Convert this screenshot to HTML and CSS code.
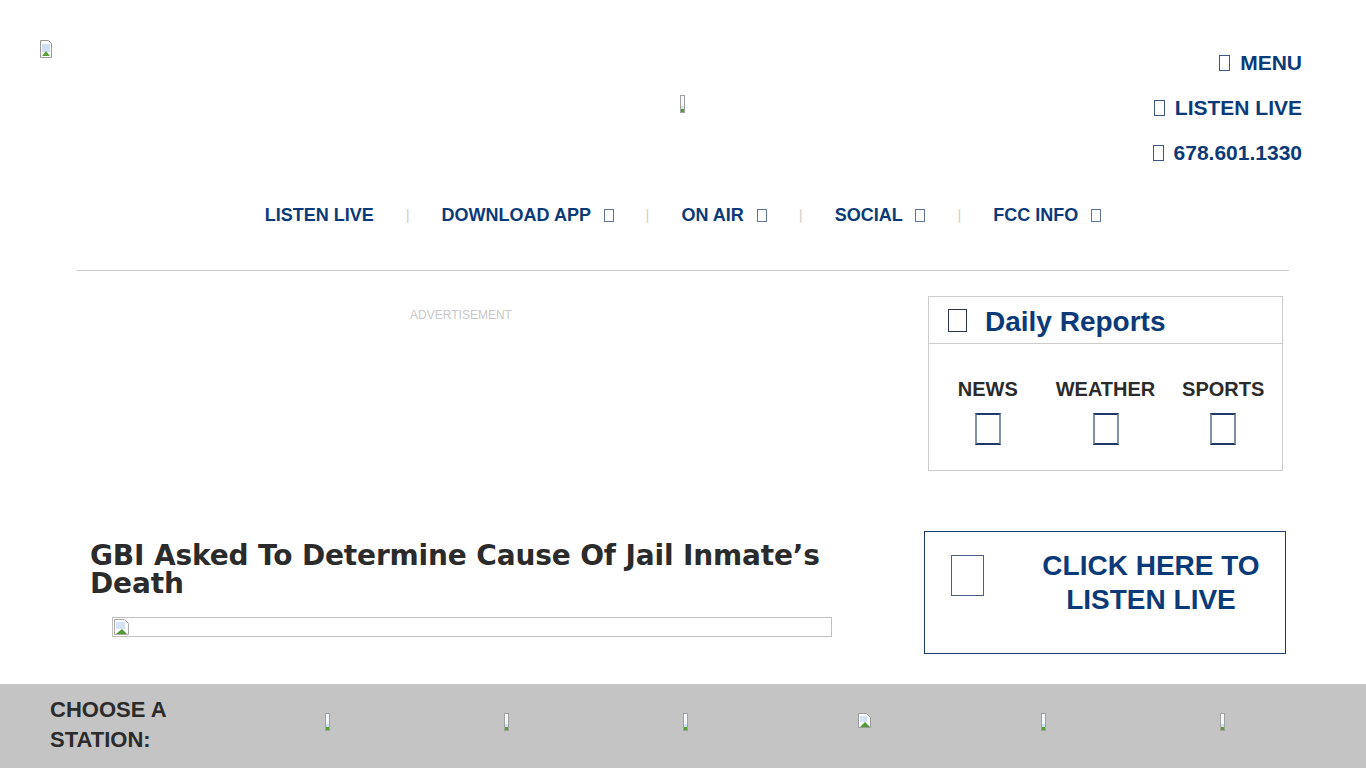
FILE: index.html
```html
<!DOCTYPE html>
<html>
<head>
  <link rel="stylesheet" href="styles.css">
</head>
<body>
  <header class="masthead">
    <div class="logo">
      <svg class="broken" width="12" height="18" viewBox="0 0 12 18">
        <path d="M0.5 0.5h8l3 3v14h-11z" fill="#fff" stroke="#999"/>
        <rect x="2" y="4" width="8" height="8" fill="#cfe0f4"/>
        <path d="M2 16l4-5 4 5z" fill="#5a9e3a"/>
      </svg>
    </div>
    <div class="mid-img"><span class="thin-img"></span></div>
    <ul class="quick-links">
      <li><span class="tofu"></span> MENU</li>
      <li><span class="tofu"></span> LISTEN LIVE</li>
      <li><span class="tofu"></span> 678.601.1330</li>
    </ul>
  </header>

  <nav class="main-nav">
    <a href="#">LISTEN LIVE</a>
    <span class="sep">|</span>
    <a href="#">DOWNLOAD APP <span class="tofu small"></span></a>
    <span class="sep">|</span>
    <a href="#">ON AIR <span class="tofu small"></span></a>
    <span class="sep">|</span>
    <a href="#">SOCIAL <span class="tofu small"></span></a>
    <span class="sep">|</span>
    <a href="#">FCC INFO <span class="tofu small"></span></a>
  </nav>

  <div class="container">
    <hr class="rule">

    <div class="content">
      <main class="left-col">
        <div class="ad-slot">ADVERTISEMENT</div>
        <h1 class="headline">GBI Asked To Determine Cause Of Jail Inmate’s Death</h1>
        <div class="article-img">
          <svg width="16" height="16" viewBox="0 0 16 16">
            <path d="M0.5 0.5h10l4 4v11h-14z" fill="#fff" stroke="#aaa"/>
            <rect x="2" y="3" width="9" height="7" fill="#d3e3f5"/>
            <path d="M2 15l6-5 5 5z" fill="#4f9a34"/>
          </svg>
        </div>
      </main>

      <aside class="right-col">
        <div class="daily-box">
          <div class="daily-head">
            <span class="head-icon"></span>
            <span class="daily-title">Daily Reports</span>
          </div>
          <div class="daily-body">
            <div class="report">
              <div class="report-name">NEWS</div>
              <span class="report-icon"></span>
            </div>
            <div class="report">
              <div class="report-name">WEATHER</div>
              <span class="report-icon"></span>
            </div>
            <div class="report">
              <div class="report-name">SPORTS</div>
              <span class="report-icon"></span>
            </div>
          </div>
        </div>

        <a class="listen-box" href="#">
          <span class="listen-icon"></span>
          <span class="listen-text">CLICK HERE TO<br>LISTEN LIVE</span>
        </a>
      </aside>
    </div>
  </div>

  <footer class="station-bar">
    <div class="station-label">CHOOSE A<br>STATION:</div>
    <div class="station"><span class="thin-img"></span></div>
    <div class="station"><span class="thin-img"></span></div>
    <div class="station"><span class="thin-img"></span></div>
    <div class="station">
      <svg width="13" height="15" viewBox="0 0 13 15">
        <path d="M0.5 0.5h8l4 4v10h-12z" fill="#fff" stroke="#999"/>
        <rect x="2" y="3" width="7" height="6" fill="#d3e3f5"/>
        <path d="M2 14l5-5 5 5z" fill="#4f9a34"/>
      </svg>
    </div>
    <div class="station"><span class="thin-img"></span></div>
    <div class="station"><span class="thin-img"></span></div>
  </footer>
</body>
</html>
```

FILE: styles.css
```css
body {
  margin: 0;
  font-family: "Liberation Sans", Arial, sans-serif;
  color: #2b2b2b;
  background: #fff;
}

a {
  text-decoration: none;
  color: inherit;
}

/* header */

.masthead {
  display: flex;
  align-items: flex-start;
  padding: 40px 64px 0 40px;
  height: 135px;
}

.logo {
  width: 12px;
  height: 18px;
}

.broken {
  display: block;
}

.mid-img {
  flex: 1;
  text-align: center;
  padding-top: 55px;
  padding-left: 160px;
}

.thin-img {
  display: inline-block;
  width: 3px;
  height: 16px;
  border: 1px solid #a0a0a0;
  background: linear-gradient(#f4f8fc 0 60%, #cde0ef 60% 80%, #5a9e3a 80%);
}

.quick-links {
  list-style: none;
  margin: 0;
  padding: 0;
  text-align: right;
  font-size: 21px;
  font-weight: bold;
  line-height: 45px;
  color: #0b3a78;
}

.tofu {
  display: inline-block;
  width: 9px;
  height: 14px;
  border: 1px solid #3d5683;
  margin-right: 4px;
  vertical-align: -1px;
}

.tofu.small {
  width: 8px;
  height: 11px;
  margin: 0 0 0 8px;
  border-color: #5f7396;
}

/* nav */

.main-nav {
  display: flex;
  justify-content: center;
  gap: 32px;
  margin-top: 20px;
  line-height: 40px;
  font-size: 18px;
  font-weight: bold;
  color: #0b3a78;
}

.main-nav .sep {
  color: #cfcfcf;
  font-weight: normal;
  font-size: 15px;
}

/* body */

.container {
  width: 1212px;
  margin: 0 auto;
}

.rule {
  border: 0;
  border-top: 1px solid #cccccc;
  margin: 35px 0 0 0;
}

.content {
  display: flex;
  gap: 79px;
  margin-top: 25px;
}

.left-col {
  width: 768px;
}

.ad-slot {
  height: 234px;
  padding-top: 12px;
  text-align: center;
  font-size: 12px;
  color: #c8c8c8;
}

.headline {
  margin: 0 0 0 13px;
  font-family: "DejaVu Sans", sans-serif;
  font-weight: bold;
  font-size: 28px;
  line-height: 28px;
  letter-spacing: -0.15px;
  color: #2b2b2b;
}

.article-img {
  margin: 19px 0 0 35px;
  width: 718px;
  height: 18px;
  border: 1px solid #c0c0c0;
}

.article-img svg {
  display: block;
  margin: 1px 0 0 1px;
}

.right-col {
  width: 362px;
}

.daily-box {
  margin: 0 3px 0 4px;
  border: 1px solid #cccccc;
}

.daily-head {
  display: flex;
  align-items: center;
  height: 42px;
  padding-top: 4px;
  padding-left: 19px;
  border-bottom: 1px solid #cccccc;
}

.head-icon {
  width: 17px;
  height: 21px;
  border: 1px solid #2b3448;
  margin: -4px 18px 0 0;
}

.daily-title {
  font-size: 28px;
  font-weight: bold;
  color: #0b3a78;
}

.daily-body {
  display: flex;
  padding: 33px 0 21px 0;
}

.report {
  flex: 1;
  text-align: center;
}

.report-name {
  font-size: 20px;
  font-weight: bold;
  line-height: 24px;
  color: #2b2b2b;
}

.report-icon {
  display: inline-block;
  width: 22px;
  height: 28px;
  margin-top: 12px;
  border: 2px solid #1f3866;
  border-left-color: #8090aa;
  border-right-color: #8090aa;
}

.listen-box {
  display: flex;
  align-items: flex-start;
  margin-top: 60px;
  padding: 17px 0 36px 26px;
  border: 1px solid #1d3a6a;
}

.listen-icon {
  flex: none;
  width: 31px;
  height: 39px;
  margin-top: 6px;
  border: 1px solid #4a5f85;
}

.listen-text {
  flex: 1;
  margin-left: 33px;
  text-align: center;
  font-size: 28px;
  font-weight: bold;
  line-height: 34px;
  color: #0b3a78;
}

/* station bar pinned to the bottom of the window */

.station-bar {
  position: fixed;
  left: 0;
  right: 0;
  bottom: 0;
  height: 84px;
  background: #c4c4c4;
  display: grid;
  grid-template-columns: 188px repeat(6, 179px);
  padding-left: 50px;
  align-items: start;
}

.station-label {
  padding-top: 11px;
  font-size: 22px;
  font-weight: bold;
  line-height: 30px;
  color: #2b2b2b;
}

.station {
  text-align: center;
  padding-top: 29px;
}

.station svg {
  display: inline-block;
}
```
